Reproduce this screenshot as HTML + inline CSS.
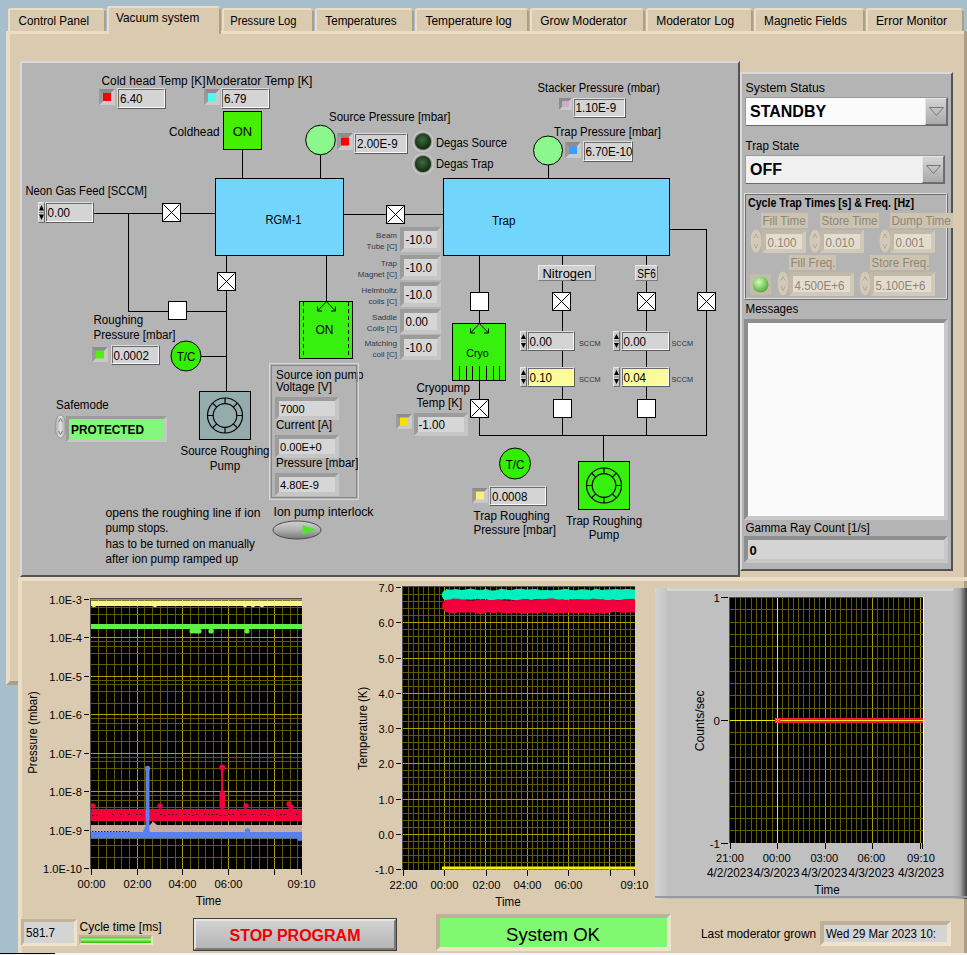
<!DOCTYPE html>
<html><head><meta charset="utf-8"><title>Vacuum system</title>
<style>
html,body{margin:0;padding:0;background:#a7bfcc;overflow:hidden;}
svg{display:block;}
text{font-family:"Liberation Sans", sans-serif;}
</style></head><body>
<svg width="967" height="955" viewBox="0 0 967 955" font-family='"Liberation Sans", sans-serif'>
<defs>
<radialGradient id="ledg" cx="0.45" cy="0.4" r="0.6"><stop offset="0" stop-color="#3f6a3f"/><stop offset="1" stop-color="#0e2a0e"/></radialGradient>
<radialGradient id="ledring" cx="0.5" cy="0.5" r="0.5"><stop offset="0.7" stop-color="#6a6a6a"/><stop offset="1" stop-color="#e0e0e0"/></radialGradient>
<radialGradient id="ledl" cx="0.4" cy="0.35" r="0.65"><stop offset="0" stop-color="#d8f8c0"/><stop offset="0.5" stop-color="#8ed870"/><stop offset="1" stop-color="#5aa848"/></radialGradient>
<linearGradient id="spin" x1="0" y1="0" x2="1" y2="0"><stop offset="0" stop-color="#a8a8a8"/><stop offset="0.5" stop-color="#e0e0e0"/><stop offset="1" stop-color="#a0a0a0"/></linearGradient>
<linearGradient id="tog" x1="0" y1="0" x2="0" y2="1"><stop offset="0" stop-color="#d0d0d0"/><stop offset="0.5" stop-color="#b0b0b0"/><stop offset="1" stop-color="#787878"/></linearGradient>
<linearGradient id="btn" x1="0" y1="0" x2="0" y2="1"><stop offset="0" stop-color="#d6d6d6"/><stop offset="1" stop-color="#a8a8a8"/></linearGradient>
<linearGradient id="stopg" x1="0" y1="0" x2="0" y2="1"><stop offset="0" stop-color="#d4d4d4"/><stop offset="1" stop-color="#b4b4b4"/></linearGradient>
<linearGradient id="prog" x1="0" y1="0" x2="0" y2="1"><stop offset="0" stop-color="#40d010"/><stop offset="0.4" stop-color="#a0f880"/><stop offset="1" stop-color="#30b800"/></linearGradient>
<linearGradient id="lgrad" x1="0" y1="0" x2="1" y2="0"><stop offset="0" stop-color="#d4d4d4"/><stop offset="1" stop-color="#c4c4c4"/></linearGradient>
<linearGradient id="rgrad" x1="0" y1="0" x2="1" y2="0"><stop offset="0" stop-color="#c0c0c0"/><stop offset="0.5" stop-color="#a8a8a8"/><stop offset="1" stop-color="#404040"/></linearGradient>
</defs>
<rect x="0" y="0" width="967" height="955" fill="#a7bfcc" />
<rect x="6" y="31" width="961" height="654" fill="#dacab0" />
<rect x="6" y="31" width="961" height="3" fill="#ecdec4" />
<rect x="6" y="31" width="4" height="654" fill="#ecdec4" />
<polygon points="6,685 10,681 964,681 967,685" fill="#ad9f86"/>
<rect x="964" y="31" width="3" height="654" fill="#ad9f86" />
<path d="M8,31 L8,11 Q8,8 11,8 L103,8 Q106,8 106,11 L106,31 Z" fill="#dacab0"/>
<path d="M8,31 L8,11 Q8,8 11,8 L103,8 L103,10 L10,10 L10,31 Z" fill="#ecdec4"/>
<path d="M104,10 L106,11 L106,31 L104,31 Z" fill="#ad9f86"/>
<text x="18.6" y="25" font-size="12" textLength="70.4" lengthAdjust="spacingAndGlyphs" >Control Panel</text>
<path d="M222,31 L222,11 Q222,8 225,8 L311,8 Q314,8 314,11 L314,31 Z" fill="#dacab0"/>
<path d="M222,31 L222,11 Q222,8 225,8 L311,8 L311,10 L224,10 L224,31 Z" fill="#ecdec4"/>
<path d="M312,10 L314,11 L314,31 L312,31 Z" fill="#ad9f86"/>
<text x="230.3" y="25" font-size="12" textLength="66.2" lengthAdjust="spacingAndGlyphs" >Pressure Log</text>
<path d="M315,31 L315,11 Q315,8 318,8 L411,8 Q414,8 414,11 L414,31 Z" fill="#dacab0"/>
<path d="M315,31 L315,11 Q315,8 318,8 L411,8 L411,10 L317,10 L317,31 Z" fill="#ecdec4"/>
<path d="M412,10 L414,11 L414,31 L412,31 Z" fill="#ad9f86"/>
<text x="325.3" y="25" font-size="12" textLength="71.4" lengthAdjust="spacingAndGlyphs" >Temperatures</text>
<path d="M415,31 L415,11 Q415,8 418,8 L526,8 Q529,8 529,11 L529,31 Z" fill="#dacab0"/>
<path d="M415,31 L415,11 Q415,8 418,8 L526,8 L526,10 L417,10 L417,31 Z" fill="#ecdec4"/>
<path d="M527,10 L529,11 L529,31 L527,31 Z" fill="#ad9f86"/>
<text x="425.5" y="25" font-size="12" textLength="86.2" lengthAdjust="spacingAndGlyphs" >Temperature log</text>
<path d="M530,31 L530,11 Q530,8 533,8 L642,8 Q645,8 645,11 L645,31 Z" fill="#dacab0"/>
<path d="M530,31 L530,11 Q530,8 533,8 L642,8 L642,10 L532,10 L532,31 Z" fill="#ecdec4"/>
<path d="M643,10 L645,11 L645,31 L643,31 Z" fill="#ad9f86"/>
<text x="540.2" y="25" font-size="12" textLength="86.8" lengthAdjust="spacingAndGlyphs" >Grow Moderator</text>
<path d="M646,31 L646,11 Q646,8 649,8 L750,8 Q753,8 753,11 L753,31 Z" fill="#dacab0"/>
<path d="M646,31 L646,11 Q646,8 649,8 L750,8 L750,10 L648,10 L648,31 Z" fill="#ecdec4"/>
<path d="M751,10 L753,11 L753,31 L751,31 Z" fill="#ad9f86"/>
<text x="656.2" y="25" font-size="12" textLength="78" lengthAdjust="spacingAndGlyphs" >Moderator Log</text>
<path d="M754,31 L754,11 Q754,8 757,8 L862,8 Q865,8 865,11 L865,31 Z" fill="#dacab0"/>
<path d="M754,31 L754,11 Q754,8 757,8 L862,8 L862,10 L756,10 L756,31 Z" fill="#ecdec4"/>
<path d="M863,10 L865,11 L865,31 L863,31 Z" fill="#ad9f86"/>
<text x="764.1" y="25" font-size="12" textLength="82.7" lengthAdjust="spacingAndGlyphs" >Magnetic Fields</text>
<path d="M866,31 L866,11 Q866,8 869,8 L961,8 Q964,8 964,11 L964,31 Z" fill="#dacab0"/>
<path d="M866,31 L866,11 Q866,8 869,8 L961,8 L961,10 L868,10 L868,31 Z" fill="#ecdec4"/>
<path d="M962,10 L964,11 L964,31 L962,31 Z" fill="#ad9f86"/>
<text x="876" y="25" font-size="12" textLength="71" lengthAdjust="spacingAndGlyphs" >Error Monitor</text>
<path d="M107,34 L107,9 Q107,6 110,6 L218,6 Q221,6 221,9 L221,34 Z" fill="#dacab0"/>
<path d="M107,34 L107,9 Q107,6 110,6 L218,6 L218,8 L109,8 L109,34 Z" fill="#ecdec4"/>
<path d="M219,8 L221,9 L221,34 L219,34 Z" fill="#ad9f86"/>
<text x="116" y="22" font-size="12" textLength="83.3" lengthAdjust="spacingAndGlyphs" >Vacuum system</text>
<rect x="109" y="31" width="110" height="3" fill="#dacab0" />
<rect x="20" y="61" width="720" height="516" fill="#b4b4b4" />
<polygon points="20,61 740,61 738,63 22,63 22,575 20,577" fill="#d9d9d9"/>
<polygon points="740,61 740,577 20,577 22,575 738,575 738,63" fill="#535353"/>
<rect x="740" y="72" width="213" height="499" fill="#b4b4b4" />
<polygon points="740,72 953,72 951,74 742,74 742,569 740,571" fill="#d9d9d9"/>
<polygon points="953,72 953,571 740,571 742,569 951,569 951,74" fill="#535353"/>
<rect x="18" y="577" width="949" height="378" fill="#dacab0" />
<rect x="18" y="577" width="949" height="4" fill="#ecdec4" />
<rect x="18" y="577" width="4" height="378" fill="#ecdec4" />
<rect x="964" y="581" width="3" height="374" fill="#ad9f86" />
<rect x="242" y="150" width="1" height="28" fill="#000"/>
<rect x="320" y="154" width="1" height="24" fill="#000"/>
<rect x="94" y="213" width="121" height="1" fill="#000"/>
<rect x="128" y="213" width="1" height="99" fill="#000"/>
<rect x="128" y="311" width="99" height="1" fill="#000"/>
<rect x="344" y="214" width="99" height="1" fill="#000"/>
<rect x="226" y="256" width="1" height="135" fill="#000"/>
<rect x="201" y="356" width="25" height="1" fill="#000"/>
<rect x="326" y="256" width="1" height="45" fill="#000"/>
<rect x="548" y="165" width="1" height="13" fill="#000"/>
<rect x="670" y="229" width="37" height="1" fill="#000"/>
<rect x="706" y="229" width="1" height="207" fill="#000"/>
<rect x="479" y="256" width="1" height="67" fill="#000"/>
<rect x="479" y="381" width="1" height="55" fill="#000"/>
<rect x="562" y="256" width="1" height="180" fill="#000"/>
<rect x="646" y="256" width="1" height="180" fill="#000"/>
<rect x="479" y="435" width="228" height="1" fill="#000"/>
<rect x="603" y="435" width="1" height="26" fill="#000"/>
<text x="101.5" y="85" font-size="12" textLength="104" lengthAdjust="spacingAndGlyphs" >Cold head Temp [K]</text>
<text x="206" y="85" font-size="12" textLength="106.5" lengthAdjust="spacingAndGlyphs" >Moderator Temp [K]</text>
<polygon points="99,89 115,89 111,93 103,93 103,101 99,105" fill="#8c8c8c"/>
<polygon points="115,89 115,105 99,105 103,101 111,101 111,93" fill="#cacaca"/>
<rect x="103" y="93" width="8" height="8" fill="#b8b8b8" />
<polygon points="99,89 103,93 103,101 99,105" fill="#9a9a9a"/>
<rect x="103.0" y="93.0" width="8" height="8" fill="#ff0000" />
<rect x="117" y="88" width="49" height="21" fill="#d4d4d4" />
<polygon points="117,88 166,88 165,89 118,89 118,108 117,109" fill="#dcdcdc"/>
<polygon points="166,88 166,109 117,109 118,108 165,108 165,89" fill="#5c5c5c"/>
<polygon points="118,89 165,89 164,90 119,90 119,107 118,108" fill="#6c6c6c"/>
<polygon points="165,89 165,108 118,108 119,107 164,107 164,90" fill="#fafafa"/>
<text x="120" y="102.5" font-size="12" textLength="22.5" lengthAdjust="spacingAndGlyphs" >6.40</text>
<polygon points="204,89 220,89 216,93 208,93 208,101 204,105" fill="#8c8c8c"/>
<polygon points="220,89 220,105 204,105 208,101 216,101 216,93" fill="#cacaca"/>
<rect x="208" y="93" width="8" height="8" fill="#b8b8b8" />
<polygon points="204,89 208,93 208,101 204,105" fill="#9a9a9a"/>
<rect x="208.0" y="93.0" width="8" height="8" fill="#55f5f5" />
<rect x="221" y="88" width="49" height="21" fill="#d4d4d4" />
<polygon points="221,88 270,88 269,89 222,89 222,108 221,109" fill="#dcdcdc"/>
<polygon points="270,88 270,109 221,109 222,108 269,108 269,89" fill="#5c5c5c"/>
<polygon points="222,89 269,89 268,90 223,90 223,107 222,108" fill="#6c6c6c"/>
<polygon points="269,89 269,108 222,108 223,107 268,107 268,90" fill="#fafafa"/>
<text x="224" y="102.5" font-size="12" textLength="22.5" lengthAdjust="spacingAndGlyphs" >6.79</text>
<rect x="223.5" y="111.5" width="38" height="38" fill="#44f000" stroke="#000" stroke-width="1"/>
<text x="242.5" y="136" font-size="13" text-anchor="middle" >ON</text>
<text x="169" y="136" font-size="12" textLength="50.5" lengthAdjust="spacingAndGlyphs" >Coldhead</text>
<text x="329" y="121" font-size="12" textLength="121.5" lengthAdjust="spacingAndGlyphs" >Source Pressure [mbar]</text>
<circle cx="320.5" cy="140" r="14.8" fill="#8cf78c" stroke="#000" stroke-width="1"/>
<polygon points="337,133 353,133 349,137 341,137 341,146 337,150" fill="#8c8c8c"/>
<polygon points="353,133 353,150 337,150 341,146 349,146 349,137" fill="#cacaca"/>
<rect x="341" y="137" width="8" height="9" fill="#b8b8b8" />
<polygon points="337,133 341,137 341,146 337,150" fill="#9a9a9a"/>
<rect x="341.0" y="137.5" width="8" height="8" fill="#ff0000" />
<rect x="354" y="133" width="54" height="21" fill="#d4d4d4" />
<polygon points="354,133 408,133 407,134 355,134 355,153 354,154" fill="#dcdcdc"/>
<polygon points="408,133 408,154 354,154 355,153 407,153 407,134" fill="#5c5c5c"/>
<polygon points="355,134 407,134 406,135 356,135 356,152 355,153" fill="#6c6c6c"/>
<polygon points="407,134 407,153 355,153 356,152 406,152 406,135" fill="#fafafa"/>
<text x="357" y="147.5" font-size="12" textLength="40.6" lengthAdjust="spacingAndGlyphs" >2.00E-9</text>
<circle cx="423" cy="141.5" r="10.5" fill="url(#ledring)"/>
<circle cx="423" cy="141.5" r="8" fill="url(#ledg)"/>
<text x="436" y="146.5" font-size="12" textLength="71" lengthAdjust="spacingAndGlyphs" >Degas Source</text>
<circle cx="423" cy="164" r="10.5" fill="url(#ledring)"/>
<circle cx="423" cy="164" r="8" fill="url(#ledg)"/>
<text x="436" y="168" font-size="12" textLength="57.5" lengthAdjust="spacingAndGlyphs" >Degas Trap</text>
<text x="537.5" y="91.5" font-size="12" textLength="122.5" lengthAdjust="spacingAndGlyphs" >Stacker Pressure (mbar)</text>
<polygon points="559,98 572,98 569,101 562,101 562,107 559,110" fill="#8c8c8c"/>
<polygon points="572,98 572,110 559,110 562,107 569,107 569,101" fill="#cacaca"/>
<rect x="562" y="101" width="7" height="6" fill="#b8b8b8" />
<rect x="563" y="101.5" width="6" height="5" fill="#d8a8c8" />
<rect x="573" y="98" width="53" height="20" fill="#d4d4d4" />
<polygon points="573,98 626,98 625,99 574,99 574,117 573,118" fill="#dcdcdc"/>
<polygon points="626,98 626,118 573,118 574,117 625,117 625,99" fill="#5c5c5c"/>
<polygon points="574,99 625,99 624,100 575,100 575,116 574,117" fill="#6c6c6c"/>
<polygon points="625,99 625,117 574,117 575,116 624,116 624,100" fill="#fafafa"/>
<text x="575.5" y="112" font-size="12" textLength="40.6" lengthAdjust="spacingAndGlyphs" >1.10E-9</text>
<text x="554" y="136" font-size="12" textLength="107" lengthAdjust="spacingAndGlyphs" >Trap Pressure [mbar]</text>
<circle cx="548" cy="150.5" r="14.5" fill="#8cf78c" stroke="#000" stroke-width="1"/>
<polygon points="565,142 581,142 577,146 569,146 569,154 565,158" fill="#8c8c8c"/>
<polygon points="581,142 581,158 565,158 569,154 577,154 577,146" fill="#cacaca"/>
<rect x="569" y="146" width="8" height="8" fill="#b8b8b8" />
<polygon points="565,142 569,146 569,154 565,158" fill="#9a9a9a"/>
<rect x="569.0" y="146.0" width="8" height="8" fill="#3f9cff" />
<rect x="583" y="141" width="50" height="21" fill="#d4d4d4" />
<polygon points="583,141 633,141 632,142 584,142 584,161 583,162" fill="#dcdcdc"/>
<polygon points="633,141 633,162 583,162 584,161 632,161 632,142" fill="#5c5c5c"/>
<polygon points="584,142 632,142 631,143 585,143 585,160 584,161" fill="#6c6c6c"/>
<polygon points="632,142 632,161 584,161 585,160 631,160 631,143" fill="#fafafa"/>
<text x="585.5" y="155.5" font-size="12" textLength="47.0" lengthAdjust="spacingAndGlyphs" >6.70E-10</text>
<text x="25.5" y="195" font-size="12" textLength="121.5" lengthAdjust="spacingAndGlyphs" >Neon Gas Feed [SCCM]</text>
<rect x="38" y="202" width="7" height="21" fill="#c8c8c8" />
<polygon points="38,202 45,202 44,203 39,203 39,222 38,223" fill="#e8e8e8"/>
<polygon points="45,202 45,223 38,223 39,222 44,222 44,203" fill="#6a6a6a"/>
<polygon points="39.0,210.5 44.0,210.5 41.5,205" fill="#000"/>
<polygon points="39.0,214.5 44.0,214.5 41.5,220" fill="#000"/>
<rect x="39" y="212.0" width="5" height="1" fill="#808080"/>
<rect x="45" y="202" width="49" height="21" fill="#d4d4d4" />
<polygon points="45,202 94,202 93,203 46,203 46,222 45,223" fill="#dcdcdc"/>
<polygon points="94,202 94,223 45,223 46,222 93,222 93,203" fill="#5c5c5c"/>
<polygon points="46,203 93,203 92,204 47,204 47,221 46,222" fill="#6c6c6c"/>
<polygon points="93,203 93,222 46,222 47,221 92,221 92,204" fill="#fafafa"/>
<text x="47.5" y="216.5" font-size="12" textLength="22.5" lengthAdjust="spacingAndGlyphs" >0.00</text>
<rect x="162.5" y="203.5" width="18" height="18" fill="#fff" stroke="#000" stroke-width="1"/>
<path d="M163.5,204.5 L179.5,220.5 M179.5,204.5 L163.5,220.5" stroke="#000" stroke-width="1"/>
<rect x="215.5" y="178.5" width="128" height="77" fill="#72d6fc" stroke="#000" stroke-width="1"/>
<text x="283.5" y="224" font-size="12" text-anchor="middle" textLength="36" lengthAdjust="spacingAndGlyphs" >RGM-1</text>
<rect x="386.5" y="205.5" width="18" height="18" fill="#fff" stroke="#000" stroke-width="1"/>
<path d="M387.5,206.5 L403.5,222.5 M403.5,206.5 L387.5,222.5" stroke="#000" stroke-width="1"/>
<rect x="217.5" y="272.5" width="18" height="18" fill="#fff" stroke="#000" stroke-width="1"/>
<path d="M218.5,273.5 L234.5,289.5 M234.5,273.5 L218.5,289.5" stroke="#000" stroke-width="1"/>
<rect x="168.5" y="301.5" width="18" height="18" fill="#fff" stroke="#000" stroke-width="1"/>
<circle cx="186" cy="356" r="15" fill="#33ee00" stroke="#000" stroke-width="1"/>
<text x="186" y="361" font-size="12" text-anchor="middle" textLength="18.7" lengthAdjust="spacingAndGlyphs" >T/C</text>
<text x="93.5" y="324" font-size="12" textLength="49.6" lengthAdjust="spacingAndGlyphs" >Roughing</text>
<text x="93.5" y="339" font-size="12" textLength="82" lengthAdjust="spacingAndGlyphs" >Pressure [mbar]</text>
<polygon points="92,347 108,347 104,351 96,351 96,358 92,362" fill="#8c8c8c"/>
<polygon points="108,347 108,362 92,362 96,358 104,358 104,351" fill="#cacaca"/>
<rect x="96" y="351" width="8" height="7" fill="#b8b8b8" />
<polygon points="92,347 96,351 96,358 92,362" fill="#9a9a9a"/>
<rect x="96.0" y="350.5" width="8" height="8" fill="#55ee11" />
<rect x="111" y="345" width="49" height="20" fill="#d4d4d4" />
<polygon points="111,345 160,345 159,346 112,346 112,364 111,365" fill="#dcdcdc"/>
<polygon points="160,345 160,365 111,365 112,364 159,364 159,346" fill="#5c5c5c"/>
<polygon points="112,346 159,346 158,347 113,347 113,363 112,364" fill="#6c6c6c"/>
<polygon points="159,346 159,364 112,364 113,363 158,363 158,347" fill="#fafafa"/>
<text x="113.5" y="359.5" font-size="12" textLength="35.4" lengthAdjust="spacingAndGlyphs" >0.0002</text>
<rect x="199.5" y="391.5" width="51" height="48" fill="#94acac" stroke="#000" stroke-width="1"/>
<circle cx="225.0" cy="415.5" r="17.5" fill="none" stroke="#000" stroke-width="1.2"/>
<circle cx="225.0" cy="415.5" r="11.8" fill="none" stroke="#000" stroke-width="1.2"/>
<path d="M236.80,415.50 L242.50,415.50 M233.34,423.84 L237.37,427.87 M225.00,427.30 L225.00,433.00 M216.66,423.84 L212.63,427.87 M213.20,415.50 L207.50,415.50 M216.66,407.16 L212.63,403.13 M225.00,403.70 L225.00,398.00 M233.34,407.16 L237.37,403.13 " stroke="#000" stroke-width="1.2"/>
<text x="225" y="454.5" font-size="12" text-anchor="middle" textLength="89" lengthAdjust="spacingAndGlyphs" >Source Roughing</text>
<text x="225" y="469.5" font-size="12" text-anchor="middle" textLength="30.3" lengthAdjust="spacingAndGlyphs" >Pump</text>
<text x="56" y="408.5" font-size="12" textLength="52.8" lengthAdjust="spacingAndGlyphs" >Safemode</text>
<ellipse cx="60.5" cy="426.5" rx="5.5" ry="11.5" fill="url(#spin)" stroke="#9a9a9a" stroke-width="1"/>
<path d="M58.5,422 L60.5,418.5 L62.5,422 M58.5,431 L60.5,434.5 L62.5,431" stroke="#666" stroke-width="0.8" fill="none"/>
<polygon points="66,416 167,416 164,419 69,419 69,439 66,442" fill="#9c9c9c"/>
<polygon points="167,416 167,442 66,442 69,439 164,439 164,419" fill="#c6c6c6"/>
<rect x="69" y="419" width="95" height="20" fill="#80f87a" />
<text x="71" y="433.5" font-size="13" font-weight="bold" textLength="73" lengthAdjust="spacingAndGlyphs" >PROTECTED</text>
<rect x="299.5" y="301.5" width="53" height="57" fill="#36f00e" stroke="#000" stroke-width="1"/>
<path d="M303.5,302 L303.5,358 M348.5,302 L348.5,358" stroke="#000" stroke-width="1" stroke-dasharray="4,3"/>
<path d="M326.5,301.5 L317.5,311 M326.5,301.5 L335.5,311 M317.5,311 L317.5,306.5 M317.5,311 L322,311 M335.5,311 L335.5,306.5 M335.5,311 L331,311" stroke="#000" stroke-width="1" fill="none"/>
<text x="324.5" y="334" font-size="12" text-anchor="middle" >ON</text>
<polygon points="400,227 441,227 437,231 404,231 404,248 400,252" fill="#9c9c9c"/>
<polygon points="441,227 441,252 400,252 404,248 437,248 437,231" fill="#c6c6c6"/>
<rect x="404" y="231" width="33" height="17" fill="#d6d6d6" />
<text x="405.5" y="243.5" font-size="12" textLength="26.4" lengthAdjust="spacingAndGlyphs" >-10.0</text>
<text x="397" y="238" font-size="8" text-anchor="end" fill="#2e3a4a" >Beam</text>
<text x="397" y="249" font-size="8" text-anchor="end" fill="#2e3a4a" >Tube [C]</text>
<polygon points="400,255 441,255 437,259 404,259 404,276 400,280" fill="#9c9c9c"/>
<polygon points="441,255 441,280 400,280 404,276 437,276 437,259" fill="#c6c6c6"/>
<rect x="404" y="259" width="33" height="17" fill="#d6d6d6" />
<text x="405.5" y="271.5" font-size="12" textLength="26.4" lengthAdjust="spacingAndGlyphs" >-10.0</text>
<text x="397" y="266" font-size="8" text-anchor="end" fill="#2e3a4a" >Trap</text>
<text x="397" y="277" font-size="8" text-anchor="end" fill="#2e3a4a" >Magnet [C]</text>
<polygon points="400,282 441,282 437,286 404,286 404,303 400,307" fill="#9c9c9c"/>
<polygon points="441,282 441,307 400,307 404,303 437,303 437,286" fill="#c6c6c6"/>
<rect x="404" y="286" width="33" height="17" fill="#d6d6d6" />
<text x="405.5" y="298.5" font-size="12" textLength="26.4" lengthAdjust="spacingAndGlyphs" >-10.0</text>
<text x="397" y="293" font-size="8" text-anchor="end" fill="#2e3a4a" >Helmholtz</text>
<text x="397" y="304" font-size="8" text-anchor="end" fill="#2e3a4a" >coils [C]</text>
<polygon points="400,309 441,309 437,313 404,313 404,330 400,334" fill="#9c9c9c"/>
<polygon points="441,309 441,334 400,334 404,330 437,330 437,313" fill="#c6c6c6"/>
<rect x="404" y="313" width="33" height="17" fill="#d6d6d6" />
<text x="405.5" y="325.5" font-size="12" textLength="22.5" lengthAdjust="spacingAndGlyphs" >0.00</text>
<text x="397" y="320" font-size="8" text-anchor="end" fill="#2e3a4a" >Saddle</text>
<text x="397" y="331" font-size="8" text-anchor="end" fill="#2e3a4a" >Coils [C]</text>
<polygon points="400,335 441,335 437,339 404,339 404,356 400,360" fill="#9c9c9c"/>
<polygon points="441,335 441,360 400,360 404,356 437,356 437,339" fill="#c6c6c6"/>
<rect x="404" y="339" width="33" height="17" fill="#d6d6d6" />
<text x="405.5" y="351.5" font-size="12" textLength="26.4" lengthAdjust="spacingAndGlyphs" >-10.0</text>
<text x="397" y="346" font-size="8" text-anchor="end" fill="#2e3a4a" >Matching</text>
<text x="397" y="357" font-size="8" text-anchor="end" fill="#2e3a4a" >coil [C]</text>
<rect x="269" y="363" width="90" height="137" fill="#b4b4b4" />
<rect x="269.5" y="363.5" width="89" height="136" fill="none" stroke="#d6d6d6" stroke-width="1"/>
<rect x="271.5" y="365.5" width="85" height="132" fill="none" stroke="#858585" stroke-width="1"/>
<text x="276" y="378.5" font-size="12" textLength="87.5" lengthAdjust="spacingAndGlyphs" >Source ion pump</text>
<text x="276" y="390.5" font-size="12" textLength="56.0" lengthAdjust="spacingAndGlyphs" >Voltage [V]</text>
<rect x="356.5" y="365.5" width="0.01" height="20" fill="none" stroke="#858585" stroke-width="1"/>
<rect x="358.5" y="363.5" width="0.01" height="22" fill="none" stroke="#d6d6d6" stroke-width="1"/>
<polygon points="275,397 339,397 335,401 279,401 279,416 275,420" fill="#9c9c9c"/>
<polygon points="339,397 339,420 275,420 279,416 335,416 335,401" fill="#c6c6c6"/>
<rect x="279" y="401" width="56" height="15" fill="#d6d6d6" />
<text x="280" y="412.5" font-size="11.5" textLength="24.7" lengthAdjust="spacingAndGlyphs" >7000</text>
<text x="276" y="429" font-size="12" textLength="56.0" lengthAdjust="spacingAndGlyphs" >Current [A]</text>
<polygon points="275,435 339,435 335,439 279,439 279,454 275,458" fill="#9c9c9c"/>
<polygon points="339,435 339,458 275,458 279,454 335,454 335,439" fill="#c6c6c6"/>
<rect x="279" y="439" width="56" height="15" fill="#d6d6d6" />
<text x="280" y="450.5" font-size="11.5" textLength="41.7" lengthAdjust="spacingAndGlyphs" >0.00E+0</text>
<text x="276" y="466.5" font-size="12" textLength="82.4" lengthAdjust="spacingAndGlyphs" >Pressure [mbar]</text>
<polygon points="275,473 339,473 335,477 279,477 279,492 275,496" fill="#9c9c9c"/>
<polygon points="339,473 339,496 275,496 279,492 335,492 335,477" fill="#c6c6c6"/>
<rect x="279" y="477" width="56" height="15" fill="#d6d6d6" />
<text x="280" y="488.5" font-size="11.5" textLength="38.9" lengthAdjust="spacingAndGlyphs" >4.80E-9</text>
<text x="273.5" y="515.5" font-size="12" textLength="100" lengthAdjust="spacingAndGlyphs" >Ion pump interlock</text>
<ellipse cx="297" cy="530" rx="24" ry="9" fill="url(#tog)" stroke="#4a4a4a" stroke-width="1"/>
<polygon points="302.5,525 302.5,534.5 316,529.7" fill="#4ee82a"/>
<text x="105.5" y="517" font-size="12" textLength="155" lengthAdjust="spacingAndGlyphs" >opens the roughing line if ion</text>
<text x="105.5" y="532" font-size="12" textLength="63.1" lengthAdjust="spacingAndGlyphs" >pump stops.</text>
<text x="105.5" y="547.5" font-size="12" textLength="149.4" lengthAdjust="spacingAndGlyphs" >has to be turned on manually</text>
<text x="105.5" y="562.5" font-size="12" textLength="132.6" lengthAdjust="spacingAndGlyphs" >after ion pump ramped up</text>
<rect x="443.5" y="178.5" width="226" height="77" fill="#72d6fc" stroke="#000" stroke-width="1"/>
<text x="492" y="224.5" font-size="12" textLength="23.4" lengthAdjust="spacingAndGlyphs" >Trap</text>
<rect x="538" y="265" width="58" height="16" fill="#d0d0d0" />
<polygon points="538,265 596,265 595,266 539,266 539,280 538,281" fill="#ececec"/>
<polygon points="596,265 596,281 538,281 539,280 595,280 595,266" fill="#7c7c7c"/>
<text x="567" y="278" font-size="12" text-anchor="middle" textLength="49" lengthAdjust="spacingAndGlyphs" >Nitrogen</text>
<rect x="635" y="265" width="23" height="16" fill="#d0d0d0" />
<polygon points="635,265 658,265 657,266 636,266 636,280 635,281" fill="#ececec"/>
<polygon points="658,265 658,281 635,281 636,280 657,280 657,266" fill="#7c7c7c"/>
<text x="646.5" y="278" font-size="12" text-anchor="middle" textLength="18.5" lengthAdjust="spacingAndGlyphs" >SF6</text>
<rect x="470.5" y="292.5" width="18" height="18" fill="#fff" stroke="#000" stroke-width="1"/>
<rect x="552.5" y="292.5" width="18" height="18" fill="#fff" stroke="#000" stroke-width="1"/>
<path d="M553.5,293.5 L569.5,309.5 M569.5,293.5 L553.5,309.5" stroke="#000" stroke-width="1"/>
<rect x="637.5" y="292.5" width="18" height="18" fill="#fff" stroke="#000" stroke-width="1"/>
<path d="M638.5,293.5 L654.5,309.5 M654.5,293.5 L638.5,309.5" stroke="#000" stroke-width="1"/>
<rect x="697.5" y="292.5" width="18" height="18" fill="#fff" stroke="#000" stroke-width="1"/>
<path d="M698.5,293.5 L714.5,309.5 M714.5,293.5 L698.5,309.5" stroke="#000" stroke-width="1"/>
<rect x="452.5" y="323.5" width="53" height="57" fill="#36f00e" stroke="#000" stroke-width="1"/>
<text x="477.5" y="357" font-size="11" text-anchor="middle" textLength="22.4" lengthAdjust="spacingAndGlyphs" >Cryo</text>
<path d="M459.5,366 L459.5,381 M466.5,366 L466.5,381 M472.5,366 L472.5,381 M479.5,366 L479.5,381 M486.5,366 L486.5,381 M493.5,366 L493.5,381 M499.5,366 L499.5,381" stroke="#000" stroke-width="1"/>
<path d="M479.5,323.5 L470.5,333 M479.5,323.5 L488.5,333 M470.5,333 L470.5,328.5 M470.5,333 L475,333 M488.5,333 L488.5,328.5 M488.5,333 L484,333" stroke="#000" stroke-width="1" fill="none"/>
<rect x="470.5" y="399.5" width="18" height="18" fill="#fff" stroke="#000" stroke-width="1"/>
<path d="M471.5,400.5 L487.5,416.5 M487.5,400.5 L471.5,416.5" stroke="#000" stroke-width="1"/>
<rect x="520" y="331" width="7" height="20" fill="#c8c8c8" />
<polygon points="520,331 527,331 526,332 521,332 521,350 520,351" fill="#e8e8e8"/>
<polygon points="527,331 527,351 520,351 521,350 526,350 526,332" fill="#6a6a6a"/>
<polygon points="521.0,339.0 526.0,339.0 523.5,334" fill="#000"/>
<polygon points="521.0,343.0 526.0,343.0 523.5,348" fill="#000"/>
<rect x="521" y="340.5" width="5" height="1" fill="#808080"/>
<rect x="527" y="331" width="48" height="20" fill="#d4d4d4" />
<polygon points="527,331 575,331 574,332 528,332 528,350 527,351" fill="#dcdcdc"/>
<polygon points="575,331 575,351 527,351 528,350 574,350 574,332" fill="#5c5c5c"/>
<polygon points="528,332 574,332 573,333 529,333 529,349 528,350" fill="#6c6c6c"/>
<polygon points="574,332 574,350 528,350 529,349 573,349 573,333" fill="#fafafa"/>
<text x="529.5" y="345.5" font-size="12" textLength="22.5" lengthAdjust="spacingAndGlyphs" >0.00</text>
<text x="579" y="345.5" font-size="8" fill="#333" textLength="21.5" lengthAdjust="spacingAndGlyphs" >SCCM</text>
<rect x="520" y="367" width="7" height="20" fill="#c8c8c8" />
<polygon points="520,367 527,367 526,368 521,368 521,386 520,387" fill="#e8e8e8"/>
<polygon points="527,367 527,387 520,387 521,386 526,386 526,368" fill="#6a6a6a"/>
<polygon points="521.0,375.0 526.0,375.0 523.5,370" fill="#000"/>
<polygon points="521.0,379.0 526.0,379.0 523.5,384" fill="#000"/>
<rect x="521" y="376.5" width="5" height="1" fill="#808080"/>
<rect x="527" y="367" width="48" height="20" fill="#fbfb9c" />
<polygon points="527,367 575,367 574,368 528,368 528,386 527,387" fill="#dcdcdc"/>
<polygon points="575,367 575,387 527,387 528,386 574,386 574,368" fill="#5c5c5c"/>
<polygon points="528,368 574,368 573,369 529,369 529,385 528,386" fill="#6c6c6c"/>
<polygon points="574,368 574,386 528,386 529,385 573,385 573,369" fill="#fafafa"/>
<text x="529.5" y="381.5" font-size="12" textLength="22.5" lengthAdjust="spacingAndGlyphs" >0.10</text>
<text x="579" y="381.5" font-size="8" fill="#333" textLength="21.5" lengthAdjust="spacingAndGlyphs" >SCCM</text>
<rect x="613" y="331" width="7" height="20" fill="#c8c8c8" />
<polygon points="613,331 620,331 619,332 614,332 614,350 613,351" fill="#e8e8e8"/>
<polygon points="620,331 620,351 613,351 614,350 619,350 619,332" fill="#6a6a6a"/>
<polygon points="614.0,339.0 619.0,339.0 616.5,334" fill="#000"/>
<polygon points="614.0,343.0 619.0,343.0 616.5,348" fill="#000"/>
<rect x="614" y="340.5" width="5" height="1" fill="#808080"/>
<rect x="621" y="331" width="49" height="20" fill="#d4d4d4" />
<polygon points="621,331 670,331 669,332 622,332 622,350 621,351" fill="#dcdcdc"/>
<polygon points="670,331 670,351 621,351 622,350 669,350 669,332" fill="#5c5c5c"/>
<polygon points="622,332 669,332 668,333 623,333 623,349 622,350" fill="#6c6c6c"/>
<polygon points="669,332 669,350 622,350 623,349 668,349 668,333" fill="#fafafa"/>
<text x="623.5" y="345.5" font-size="12" textLength="22.5" lengthAdjust="spacingAndGlyphs" >0.00</text>
<text x="671.5" y="345.5" font-size="8" fill="#333" textLength="21.5" lengthAdjust="spacingAndGlyphs" >SCCM</text>
<rect x="613" y="367" width="7" height="20" fill="#c8c8c8" />
<polygon points="613,367 620,367 619,368 614,368 614,386 613,387" fill="#e8e8e8"/>
<polygon points="620,367 620,387 613,387 614,386 619,386 619,368" fill="#6a6a6a"/>
<polygon points="614.0,375.0 619.0,375.0 616.5,370" fill="#000"/>
<polygon points="614.0,379.0 619.0,379.0 616.5,384" fill="#000"/>
<rect x="614" y="376.5" width="5" height="1" fill="#808080"/>
<rect x="621" y="367" width="49" height="20" fill="#fbfb9c" />
<polygon points="621,367 670,367 669,368 622,368 622,386 621,387" fill="#dcdcdc"/>
<polygon points="670,367 670,387 621,387 622,386 669,386 669,368" fill="#5c5c5c"/>
<polygon points="622,368 669,368 668,369 623,369 623,385 622,386" fill="#6c6c6c"/>
<polygon points="669,368 669,386 622,386 623,385 668,385 668,369" fill="#fafafa"/>
<text x="623.5" y="381.5" font-size="12" textLength="22.5" lengthAdjust="spacingAndGlyphs" >0.04</text>
<text x="671.5" y="381.5" font-size="8" fill="#333" textLength="21.5" lengthAdjust="spacingAndGlyphs" >SCCM</text>
<rect x="553.5" y="399.5" width="18" height="18" fill="#fff" stroke="#000" stroke-width="1"/>
<rect x="637.5" y="399.5" width="18" height="18" fill="#fff" stroke="#000" stroke-width="1"/>
<text x="416.5" y="392" font-size="12" textLength="53.4" lengthAdjust="spacingAndGlyphs" >Cryopump</text>
<text x="416.5" y="407" font-size="12" textLength="45.7" lengthAdjust="spacingAndGlyphs" >Temp [K]</text>
<polygon points="396,414 412,414 408,418 400,418 400,425 396,429" fill="#8c8c8c"/>
<polygon points="412,414 412,429 396,429 400,425 408,425 408,418" fill="#cacaca"/>
<rect x="400" y="418" width="8" height="7" fill="#b8b8b8" />
<polygon points="396,414 400,418 400,425 396,429" fill="#9a9a9a"/>
<rect x="400.0" y="417.5" width="8" height="8" fill="#f8e000" />
<polygon points="414,413 468,413 464,417 418,417 418,432 414,436" fill="#9c9c9c"/>
<polygon points="468,413 468,436 414,436 418,432 464,432 464,417" fill="#c6c6c6"/>
<rect x="418" y="417" width="46" height="15" fill="#d6d6d6" />
<text x="418.5" y="428.5" font-size="12" textLength="26.4" lengthAdjust="spacingAndGlyphs" >-1.00</text>
<circle cx="515" cy="463.5" r="15.5" fill="#33ee00" stroke="#000" stroke-width="1"/>
<text x="515" y="469" font-size="12" text-anchor="middle" textLength="18.7" lengthAdjust="spacingAndGlyphs" >T/C</text>
<polygon points="472,488 488,488 484,492 476,492 476,499 472,503" fill="#8c8c8c"/>
<polygon points="488,488 488,503 472,503 476,499 484,499 484,492" fill="#cacaca"/>
<rect x="476" y="492" width="8" height="7" fill="#b8b8b8" />
<polygon points="472,488 476,492 476,499 472,503" fill="#9a9a9a"/>
<rect x="476.0" y="491.5" width="8" height="8" fill="#f8f07a" />
<rect x="489" y="486" width="58" height="20" fill="#d4d4d4" />
<polygon points="489,486 547,486 546,487 490,487 490,505 489,506" fill="#dcdcdc"/>
<polygon points="547,486 547,506 489,506 490,505 546,505 546,487" fill="#5c5c5c"/>
<polygon points="490,487 546,487 545,488 491,488 491,504 490,505" fill="#6c6c6c"/>
<polygon points="546,487 546,505 490,505 491,504 545,504 545,488" fill="#fafafa"/>
<text x="492" y="501" font-size="12" textLength="35.4" lengthAdjust="spacingAndGlyphs" >0.0008</text>
<text x="473.5" y="520" font-size="12" textLength="76.2" lengthAdjust="spacingAndGlyphs" >Trap Roughing</text>
<text x="473.5" y="534" font-size="12" textLength="82.4" lengthAdjust="spacingAndGlyphs" >Pressure [mbar]</text>
<rect x="578.5" y="461.5" width="51" height="48" fill="#36f00e" stroke="#000" stroke-width="1"/>
<circle cx="604.0" cy="485.5" r="17.5" fill="none" stroke="#000" stroke-width="1.2"/>
<circle cx="604.0" cy="485.5" r="11.8" fill="none" stroke="#000" stroke-width="1.2"/>
<path d="M615.80,485.50 L621.50,485.50 M612.34,493.84 L616.37,497.87 M604.00,497.30 L604.00,503.00 M595.66,493.84 L591.63,497.87 M592.20,485.50 L586.50,485.50 M595.66,477.16 L591.63,473.13 M604.00,473.70 L604.00,468.00 M612.34,477.16 L616.37,473.13 " stroke="#000" stroke-width="1.2"/>
<text x="604" y="525" font-size="12" text-anchor="middle" textLength="76.2" lengthAdjust="spacingAndGlyphs" >Trap Roughing</text>
<text x="604" y="539" font-size="12" text-anchor="middle" textLength="30.3" lengthAdjust="spacingAndGlyphs" >Pump</text>
<text x="745.5" y="91.5" font-size="12" textLength="79.5" lengthAdjust="spacingAndGlyphs" >System Status</text>
<rect x="745" y="97" width="203" height="29" fill="#fbfbfb" />
<polygon points="745,97 948,97 947,98 746,98 746,125 745,126" fill="#9a9a9a"/>
<polygon points="948,97 948,126 745,126 746,125 947,125 947,98" fill="#6a6a6a"/>
<rect x="925" y="98" width="22" height="27" fill="url(#btn)" />
<polygon points="925,98 947,98 946,99 926,99 926,124 925,125" fill="#e4e4e4"/>
<polygon points="947,98 947,125 925,125 926,124 946,124 946,99" fill="#707070"/>
<polygon points="929.5,107.5 943.5,107.5 936.5,115.5" fill="none" stroke="#777" stroke-width="1"/>
<text x="750" y="116.5" font-size="16" font-weight="bold" >STANDBY</text>
<text x="745.5" y="150" font-size="12" textLength="53.6" lengthAdjust="spacingAndGlyphs" >Trap State</text>
<rect x="745" y="155" width="200" height="29" fill="#f0f0f0" />
<polygon points="745,155 945,155 944,156 746,156 746,183 745,184" fill="#9a9a9a"/>
<polygon points="945,155 945,184 745,184 746,183 944,183 944,156" fill="#6a6a6a"/>
<rect x="922" y="156" width="22" height="27" fill="url(#btn)" />
<polygon points="922,156 944,156 943,157 923,157 923,182 922,183" fill="#e4e4e4"/>
<polygon points="944,156 944,183 922,183 923,182 943,182 943,157" fill="#707070"/>
<polygon points="926.5,165.5 940.5,165.5 933.5,173.5" fill="none" stroke="#777" stroke-width="1"/>
<text x="750" y="174.5" font-size="16" font-weight="bold" >OFF</text>
<polygon points="744,193 948,193 947,194 745,194 745,299 744,300" fill="#e0e0e0"/>
<polygon points="948,193 948,300 744,300 745,299 947,299 947,194" fill="#6c6c6c"/>
<polygon points="745,194 947,194 946,195 746,195 746,298 745,299" fill="#6c6c6c"/>
<polygon points="947,194 947,299 745,299 746,298 946,298 946,195" fill="#e0e0e0"/>
<text x="748" y="206.5" font-size="12" font-weight="bold" textLength="166" lengthAdjust="spacingAndGlyphs" >Cycle Trap Times [s] &amp; Freq. [Hz]</text>
<rect x="761" y="213" width="47" height="15" fill="#cdc3af" />
<text x="762.5" y="225" font-size="12" fill="#8c877b" textLength="43.1" lengthAdjust="spacingAndGlyphs" >Fill Time</text>
<rect x="820" y="213" width="59" height="15" fill="#cdc3af" />
<text x="821.5" y="225" font-size="12" fill="#8c877b" textLength="56.0" lengthAdjust="spacingAndGlyphs" >Store Time</text>
<rect x="890" y="213" width="63" height="15" fill="#cdc3af" />
<text x="891.5" y="225" font-size="12" fill="#8c877b" textLength="59.2" lengthAdjust="spacingAndGlyphs" >Dump Time</text>
<ellipse cx="756.0" cy="241.0" rx="6.0" ry="12.0" fill="#d2c9b8" stroke="#bdb4a3" stroke-width="1"/>
<path d="M754.0,238.0 L756.0,234.0 L758.0,238.0 M754.0,244.0 L756.0,248.0 L758.0,244.0" stroke="#a8a090" stroke-width="0.8" fill="none"/>
<polygon points="762,230 806,230 802,234 766,234 766,249 762,253" fill="#c2b9a8"/>
<polygon points="806,230 806,253 762,253 766,249 802,249 802,234" fill="#d2cab9"/>
<rect x="766" y="234" width="36" height="15" fill="#e4ddcf" />
<text x="767.5" y="247" font-size="12" fill="#8c877b" textLength="29.0" lengthAdjust="spacingAndGlyphs" >0.100</text>
<ellipse cx="815.0" cy="241.0" rx="6.0" ry="12.0" fill="#d2c9b8" stroke="#bdb4a3" stroke-width="1"/>
<path d="M813.0,238.0 L815.0,234.0 L817.0,238.0 M813.0,244.0 L815.0,248.0 L817.0,244.0" stroke="#a8a090" stroke-width="0.8" fill="none"/>
<polygon points="820,230 864,230 860,234 824,234 824,249 820,253" fill="#c2b9a8"/>
<polygon points="864,230 864,253 820,253 824,249 860,249 860,234" fill="#d2cab9"/>
<rect x="824" y="234" width="36" height="15" fill="#e4ddcf" />
<text x="825.5" y="247" font-size="12" fill="#8c877b" textLength="29.0" lengthAdjust="spacingAndGlyphs" >0.010</text>
<ellipse cx="885.0" cy="241.0" rx="6.0" ry="12.0" fill="#d2c9b8" stroke="#bdb4a3" stroke-width="1"/>
<path d="M883.0,238.0 L885.0,234.0 L887.0,238.0 M883.0,244.0 L885.0,248.0 L887.0,244.0" stroke="#a8a090" stroke-width="0.8" fill="none"/>
<polygon points="890,230 935,230 931,234 894,234 894,249 890,253" fill="#c2b9a8"/>
<polygon points="935,230 935,253 890,253 894,249 931,249 931,234" fill="#d2cab9"/>
<rect x="894" y="234" width="37" height="15" fill="#e4ddcf" />
<text x="895.5" y="247" font-size="12" fill="#8c877b" textLength="29.0" lengthAdjust="spacingAndGlyphs" >0.001</text>
<rect x="789" y="255" width="47" height="15" fill="#cdc3af" />
<text x="790.5" y="267" font-size="12" fill="#8c877b" textLength="45.0" lengthAdjust="spacingAndGlyphs" >Fill Freq.</text>
<rect x="870" y="255" width="59" height="15" fill="#cdc3af" />
<text x="871.5" y="267" font-size="12" fill="#8c877b" textLength="57.9" lengthAdjust="spacingAndGlyphs" >Store Freq.</text>
<rect x="750" y="274" width="21" height="21" fill="#c4bcab" />
<circle cx="760.5" cy="284.5" r="8" fill="url(#ledl)"/>
<ellipse cx="783.0" cy="283.5" rx="6.0" ry="12.5" fill="#d2c9b8" stroke="#bdb4a3" stroke-width="1"/>
<path d="M781.0,280.5 L783.0,276.5 L785.0,280.5 M781.0,286.5 L783.0,290.5 L785.0,286.5" stroke="#a8a090" stroke-width="0.8" fill="none"/>
<polygon points="789,272 854,272 850,276 793,276 793,292 789,296" fill="#c2b9a8"/>
<polygon points="854,272 854,296 789,296 793,292 850,292 850,276" fill="#d2cab9"/>
<rect x="793" y="276" width="57" height="16" fill="#e4ddcf" />
<text x="794.5" y="290" font-size="12" fill="#8c877b" textLength="49.9" lengthAdjust="spacingAndGlyphs" >4.500E+6</text>
<ellipse cx="865.0" cy="283.5" rx="6.0" ry="12.5" fill="#d2c9b8" stroke="#bdb4a3" stroke-width="1"/>
<path d="M863.0,280.5 L865.0,276.5 L867.0,280.5 M863.0,286.5 L865.0,290.5 L867.0,286.5" stroke="#a8a090" stroke-width="0.8" fill="none"/>
<polygon points="870,272 935,272 931,276 874,276 874,292 870,296" fill="#c2b9a8"/>
<polygon points="935,272 935,296 870,296 874,292 931,292 931,276" fill="#d2cab9"/>
<rect x="874" y="276" width="57" height="16" fill="#e4ddcf" />
<text x="875.5" y="290" font-size="12" fill="#8c877b" textLength="49.9" lengthAdjust="spacingAndGlyphs" >5.100E+6</text>
<text x="745.5" y="312.5" font-size="12" textLength="52.8" lengthAdjust="spacingAndGlyphs" >Messages</text>
<polygon points="744,319 948,319 944,323 748,323 748,516 744,520" fill="#8e8e8e"/>
<polygon points="948,319 948,520 744,520 748,516 944,516 944,323" fill="#c8c8c8"/>
<rect x="748" y="323" width="196" height="193" fill="#fafafa" />
<text x="745.5" y="532" font-size="12" textLength="124.2" lengthAdjust="spacingAndGlyphs" >Gamma Ray Count [1/s]</text>
<polygon points="744,536 948,536 944,540 748,540 748,559 744,563" fill="#8e8e8e"/>
<polygon points="948,536 948,563 744,563 748,559 944,559 944,540" fill="#c8c8c8"/>
<rect x="748" y="540" width="196" height="19" fill="#d4d4d4" />
<text x="749.5" y="555" font-size="13" font-weight="bold" >0</text>
<clipPath id="c1"><rect x="91" y="599" width="211" height="270"/></clipPath>
<rect x="90" y="598" width="212" height="271" fill="#000" />
<g clip-path="url(#c1)">
<rect x="98" y="598" width="1" height="271" fill="#625a00"/>
<rect x="106" y="598" width="1" height="271" fill="#625a00"/>
<rect x="114" y="598" width="1" height="271" fill="#625a00"/>
<rect x="121" y="598" width="1" height="271" fill="#625a00"/>
<rect x="129" y="598" width="1" height="271" fill="#625a00"/>
<rect x="137" y="598" width="1" height="271" fill="#ac9e00"/>
<rect x="144" y="598" width="1" height="271" fill="#625a00"/>
<rect x="152" y="598" width="1" height="271" fill="#625a00"/>
<rect x="160" y="598" width="1" height="271" fill="#625a00"/>
<rect x="167" y="598" width="1" height="271" fill="#625a00"/>
<rect x="175" y="598" width="1" height="271" fill="#625a00"/>
<rect x="182" y="598" width="1" height="271" fill="#ac9e00"/>
<rect x="190" y="598" width="1" height="271" fill="#625a00"/>
<rect x="198" y="598" width="1" height="271" fill="#625a00"/>
<rect x="205" y="598" width="1" height="271" fill="#625a00"/>
<rect x="213" y="598" width="1" height="271" fill="#625a00"/>
<rect x="221" y="598" width="1" height="271" fill="#625a00"/>
<rect x="228" y="598" width="1" height="271" fill="#ac9e00"/>
<rect x="236" y="598" width="1" height="271" fill="#625a00"/>
<rect x="244" y="598" width="1" height="271" fill="#625a00"/>
<rect x="251" y="598" width="1" height="271" fill="#625a00"/>
<rect x="259" y="598" width="1" height="271" fill="#625a00"/>
<rect x="267" y="598" width="1" height="271" fill="#625a00"/>
<rect x="274" y="598" width="1" height="271" fill="#ac9e00"/>
<rect x="282" y="598" width="1" height="271" fill="#625a00"/>
<rect x="290" y="598" width="1" height="271" fill="#625a00"/>
<rect x="297" y="598" width="1" height="271" fill="#625a00"/>
<rect x="305" y="598" width="1" height="271" fill="#625a00"/>
<rect x="90" y="599" width="212" height="1" fill="#ac9e00"/>
<rect x="90" y="626" width="212" height="1" fill="#625a00"/>
<rect x="90" y="614" width="212" height="1" fill="#625a00"/>
<rect x="90" y="607" width="212" height="1" fill="#625a00"/>
<rect x="90" y="603" width="212" height="1" fill="#625a00"/>
<rect x="90" y="637" width="212" height="1" fill="#ac9e00"/>
<rect x="90" y="664" width="212" height="1" fill="#625a00"/>
<rect x="90" y="653" width="212" height="1" fill="#625a00"/>
<rect x="90" y="646" width="212" height="1" fill="#625a00"/>
<rect x="90" y="641" width="212" height="1" fill="#625a00"/>
<rect x="90" y="676" width="212" height="1" fill="#ac9e00"/>
<rect x="90" y="703" width="212" height="1" fill="#625a00"/>
<rect x="90" y="691" width="212" height="1" fill="#625a00"/>
<rect x="90" y="684" width="212" height="1" fill="#625a00"/>
<rect x="90" y="680" width="212" height="1" fill="#625a00"/>
<rect x="90" y="714" width="212" height="1" fill="#ac9e00"/>
<rect x="90" y="741" width="212" height="1" fill="#625a00"/>
<rect x="90" y="730" width="212" height="1" fill="#625a00"/>
<rect x="90" y="723" width="212" height="1" fill="#625a00"/>
<rect x="90" y="718" width="212" height="1" fill="#625a00"/>
<rect x="90" y="753" width="212" height="1" fill="#ac9e00"/>
<rect x="90" y="780" width="212" height="1" fill="#625a00"/>
<rect x="90" y="768" width="212" height="1" fill="#625a00"/>
<rect x="90" y="761" width="212" height="1" fill="#625a00"/>
<rect x="90" y="757" width="212" height="1" fill="#625a00"/>
<rect x="90" y="791" width="212" height="1" fill="#ac9e00"/>
<rect x="90" y="818" width="212" height="1" fill="#625a00"/>
<rect x="90" y="807" width="212" height="1" fill="#625a00"/>
<rect x="90" y="800" width="212" height="1" fill="#625a00"/>
<rect x="90" y="795" width="212" height="1" fill="#625a00"/>
<rect x="90" y="830" width="212" height="1" fill="#ac9e00"/>
<rect x="90" y="857" width="212" height="1" fill="#625a00"/>
<rect x="90" y="845" width="212" height="1" fill="#625a00"/>
<rect x="90" y="838" width="212" height="1" fill="#625a00"/>
<rect x="90" y="833" width="212" height="1" fill="#625a00"/>
<rect x="90" y="600.5" width="212" height="5.5" fill="#f8f87e" />
<circle cx="94" cy="605" r="2.2" fill="#f8f87e"/>
<circle cx="155" cy="605" r="2.2" fill="#f8f87e"/>
<circle cx="245" cy="605" r="2.2" fill="#f8f87e"/>
<circle cx="253" cy="605" r="2.2" fill="#f8f87e"/>
<circle cx="262" cy="605" r="2.2" fill="#f8f87e"/>
<rect x="90" y="624" width="212" height="5" fill="#60f048" />
<circle cx="192" cy="631" r="2.6" fill="#60f048"/>
<circle cx="196" cy="631" r="2.6" fill="#60f048"/>
<circle cx="199" cy="631" r="2.6" fill="#60f048"/>
<circle cx="211" cy="631" r="2.6" fill="#60f048"/>
<circle cx="247" cy="631" r="2.6" fill="#60f048"/>
<rect x="90" y="809" width="212" height="12" fill="#f2003c" />
<path d="M92,815.5 h1.5 M96,815.5 h1.5 M112,814.5 h1.5 M120,814.5 h1.5 M128,814.5 h1.5 M136,814.5 h1.5 M140,814.5 h1.5 M148,814.5 h1.5 M160,814.5 h1.5 M164,815.5 h1.5 M168,814.5 h1.5 M172,814.5 h1.5 M176,814.5 h1.5 M184,814.5 h1.5 M188,814.5 h1.5 M192,815.5 h1.5 M196,814.5 h1.5 M204,814.5 h1.5 M208,814.5 h1.5 M212,814.5 h1.5 M216,814.5 h1.5 M220,815.5 h1.5 M224,815.5 h1.5 M228,814.5 h1.5 M232,814.5 h1.5 M240,814.5 h1.5 M244,814.5 h1.5 M252,814.5 h1.5 M260,814.5 h1.5 M264,814.5 h1.5 M268,815.5 h1.5 M276,815.5 h1.5 M280,814.5 h1.5 M284,814.5 h1.5 M296,814.5 h1.5 " stroke="#400010" stroke-width="1.2"/>
<rect x="90" y="825" width="212" height="7" fill="#c8aca0" />
<path d="M150,825 L153,821.5 L157,825 Z" fill="#c8aca0"/>
<rect x="90" y="832" width="212" height="6.5" fill="#5a80ee" />
<path d="M92,831.5 h1.5 M95,831.5 h1.5 M98,831.5 h1.5 M101,831.5 h1.5 M104,831.5 h1.5 M107,831.5 h1.5 M110,831.5 h1.5 M113,831.5 h1.5 M116,831.5 h1.5 M119,831.5 h1.5 M122,831.5 h1.5 M125,831.5 h1.5 M128,831.5 h1.5 " stroke="#202020" stroke-width="1"/>
<circle cx="300" cy="838.5" r="2.5" fill="#5a80ee"/>
<rect x="145.5" y="768" width="4" height="66" fill="#5a80ee"/>
<path d="M145.5,826 L150,832 L141,836 Z" fill="#5a80ee"/>
<circle cx="147.5" cy="768.5" r="2.7" fill="#5a80ee"/>
<rect x="221.5" y="767" width="1.5" height="43" fill="#f2003c"/>
<circle cx="222.2" cy="767.5" r="3" fill="#f2003c"/>
<rect x="219.5" y="791" width="5.5" height="18" rx="2" fill="#f2003c"/>
<circle cx="93" cy="806" r="2.7" fill="#f2003c"/>
<circle cx="160" cy="806" r="2.7" fill="#f2003c"/>
<circle cx="246" cy="806" r="2.7" fill="#f2003c"/>
<circle cx="289" cy="804" r="2.7" fill="#f2003c"/>
<circle cx="291" cy="807" r="2.7" fill="#f2003c"/>
<circle cx="247.5" cy="831" r="2.7" fill="#5a80ee"/>
</g>
<rect x="90" y="598" width="1" height="271" fill="#505050"/>
<rect x="90" y="598" width="212" height="1" fill="#505050"/>
<rect x="84" y="599" width="5" height="1" fill="#000"/>
<text x="82" y="603.5" font-size="11.5" text-anchor="end" textLength="32.7" lengthAdjust="spacingAndGlyphs" >1.0E-3</text>
<rect x="84" y="637" width="5" height="1" fill="#000"/>
<text x="82" y="641.5" font-size="11.5" text-anchor="end" textLength="32.7" lengthAdjust="spacingAndGlyphs" >1.0E-4</text>
<rect x="84" y="676" width="5" height="1" fill="#000"/>
<text x="82" y="680.5" font-size="11.5" text-anchor="end" textLength="32.7" lengthAdjust="spacingAndGlyphs" >1.0E-5</text>
<rect x="84" y="714" width="5" height="1" fill="#000"/>
<text x="82" y="718.5" font-size="11.5" text-anchor="end" textLength="32.7" lengthAdjust="spacingAndGlyphs" >1.0E-6</text>
<rect x="84" y="753" width="5" height="1" fill="#000"/>
<text x="82" y="757.5" font-size="11.5" text-anchor="end" textLength="32.7" lengthAdjust="spacingAndGlyphs" >1.0E-7</text>
<rect x="84" y="791" width="5" height="1" fill="#000"/>
<text x="82" y="795.5" font-size="11.5" text-anchor="end" textLength="32.7" lengthAdjust="spacingAndGlyphs" >1.0E-8</text>
<rect x="84" y="830" width="5" height="1" fill="#000"/>
<text x="82" y="834.5" font-size="11.5" text-anchor="end" textLength="32.7" lengthAdjust="spacingAndGlyphs" >1.0E-9</text>
<rect x="84" y="868" width="5" height="1" fill="#000"/>
<text x="82" y="872.5" font-size="11.5" text-anchor="end" textLength="38.9" lengthAdjust="spacingAndGlyphs" >1.0E-10</text>
<rect x="91" y="869" width="1" height="6" fill="#000"/>
<text x="91.5" y="888" font-size="11.5" text-anchor="middle" textLength="27.8" lengthAdjust="spacingAndGlyphs" >00:00</text>
<rect x="137" y="869" width="1" height="6" fill="#000"/>
<text x="137.5" y="888" font-size="11.5" text-anchor="middle" textLength="27.8" lengthAdjust="spacingAndGlyphs" >02:00</text>
<rect x="182" y="869" width="1" height="6" fill="#000"/>
<text x="182.5" y="888" font-size="11.5" text-anchor="middle" textLength="27.8" lengthAdjust="spacingAndGlyphs" >04:00</text>
<rect x="228" y="869" width="1" height="6" fill="#000"/>
<text x="228.5" y="888" font-size="11.5" text-anchor="middle" textLength="27.8" lengthAdjust="spacingAndGlyphs" >06:00</text>
<rect x="274" y="869" width="1" height="6" fill="#000"/>
<rect x="301" y="869" width="1" height="6" fill="#000"/>
<text x="301.5" y="888" font-size="11.5" text-anchor="middle" textLength="27.8" lengthAdjust="spacingAndGlyphs" >09:10</text>
<text x="208.5" y="904.5" font-size="12" text-anchor="middle" textLength="25.3" lengthAdjust="spacingAndGlyphs" >Time</text>
<text x="0" y="0" font-size="12" text-anchor="middle" transform="translate(36.5,732.5) rotate(-90)" textLength="82.5" lengthAdjust="spacingAndGlyphs">Pressure (mbar)</text>
<clipPath id="c2"><rect x="403" y="587" width="232" height="283"/></clipPath>
<rect x="402" y="586" width="233" height="284" fill="#000" />
<g clip-path="url(#c2)">
<rect x="408" y="586" width="1" height="284" fill="#625a00"/>
<rect x="413" y="586" width="1" height="284" fill="#625a00"/>
<rect x="418" y="586" width="1" height="284" fill="#625a00"/>
<rect x="423" y="586" width="1" height="284" fill="#625a00"/>
<rect x="428" y="586" width="1" height="284" fill="#625a00"/>
<rect x="434" y="586" width="1" height="284" fill="#625a00"/>
<rect x="439" y="586" width="1" height="284" fill="#625a00"/>
<rect x="444" y="586" width="1" height="284" fill="#ac9e00"/>
<rect x="449" y="586" width="1" height="284" fill="#625a00"/>
<rect x="454" y="586" width="1" height="284" fill="#625a00"/>
<rect x="459" y="586" width="1" height="284" fill="#625a00"/>
<rect x="465" y="586" width="1" height="284" fill="#625a00"/>
<rect x="470" y="586" width="1" height="284" fill="#625a00"/>
<rect x="475" y="586" width="1" height="284" fill="#625a00"/>
<rect x="480" y="586" width="1" height="284" fill="#625a00"/>
<rect x="485" y="586" width="1" height="284" fill="#ac9e00"/>
<rect x="490" y="586" width="1" height="284" fill="#625a00"/>
<rect x="496" y="586" width="1" height="284" fill="#625a00"/>
<rect x="501" y="586" width="1" height="284" fill="#625a00"/>
<rect x="506" y="586" width="1" height="284" fill="#625a00"/>
<rect x="511" y="586" width="1" height="284" fill="#625a00"/>
<rect x="516" y="586" width="1" height="284" fill="#625a00"/>
<rect x="521" y="586" width="1" height="284" fill="#625a00"/>
<rect x="527" y="586" width="1" height="284" fill="#ac9e00"/>
<rect x="532" y="586" width="1" height="284" fill="#625a00"/>
<rect x="537" y="586" width="1" height="284" fill="#625a00"/>
<rect x="542" y="586" width="1" height="284" fill="#625a00"/>
<rect x="547" y="586" width="1" height="284" fill="#625a00"/>
<rect x="553" y="586" width="1" height="284" fill="#625a00"/>
<rect x="558" y="586" width="1" height="284" fill="#625a00"/>
<rect x="563" y="586" width="1" height="284" fill="#625a00"/>
<rect x="568" y="586" width="1" height="284" fill="#ac9e00"/>
<rect x="573" y="586" width="1" height="284" fill="#625a00"/>
<rect x="578" y="586" width="1" height="284" fill="#625a00"/>
<rect x="584" y="586" width="1" height="284" fill="#625a00"/>
<rect x="589" y="586" width="1" height="284" fill="#625a00"/>
<rect x="594" y="586" width="1" height="284" fill="#625a00"/>
<rect x="599" y="586" width="1" height="284" fill="#625a00"/>
<rect x="604" y="586" width="1" height="284" fill="#625a00"/>
<rect x="609" y="586" width="1" height="284" fill="#ac9e00"/>
<rect x="615" y="586" width="1" height="284" fill="#625a00"/>
<rect x="620" y="586" width="1" height="284" fill="#625a00"/>
<rect x="625" y="586" width="1" height="284" fill="#625a00"/>
<rect x="630" y="586" width="1" height="284" fill="#625a00"/>
<rect x="635" y="586" width="1" height="284" fill="#625a00"/>
<rect x="402" y="594" width="233" height="1" fill="#625a00"/>
<rect x="402" y="601" width="233" height="1" fill="#625a00"/>
<rect x="402" y="608" width="233" height="1" fill="#625a00"/>
<rect x="402" y="615" width="233" height="1" fill="#625a00"/>
<rect x="402" y="622" width="233" height="1" fill="#ac9e00"/>
<rect x="402" y="629" width="233" height="1" fill="#625a00"/>
<rect x="402" y="636" width="233" height="1" fill="#625a00"/>
<rect x="402" y="643" width="233" height="1" fill="#625a00"/>
<rect x="402" y="651" width="233" height="1" fill="#625a00"/>
<rect x="402" y="658" width="233" height="1" fill="#ac9e00"/>
<rect x="402" y="665" width="233" height="1" fill="#625a00"/>
<rect x="402" y="672" width="233" height="1" fill="#625a00"/>
<rect x="402" y="679" width="233" height="1" fill="#625a00"/>
<rect x="402" y="686" width="233" height="1" fill="#625a00"/>
<rect x="402" y="693" width="233" height="1" fill="#ac9e00"/>
<rect x="402" y="700" width="233" height="1" fill="#625a00"/>
<rect x="402" y="707" width="233" height="1" fill="#625a00"/>
<rect x="402" y="714" width="233" height="1" fill="#625a00"/>
<rect x="402" y="721" width="233" height="1" fill="#625a00"/>
<rect x="402" y="728" width="233" height="1" fill="#ac9e00"/>
<rect x="402" y="735" width="233" height="1" fill="#625a00"/>
<rect x="402" y="742" width="233" height="1" fill="#625a00"/>
<rect x="402" y="749" width="233" height="1" fill="#625a00"/>
<rect x="402" y="756" width="233" height="1" fill="#625a00"/>
<rect x="402" y="763" width="233" height="1" fill="#ac9e00"/>
<rect x="402" y="770" width="233" height="1" fill="#625a00"/>
<rect x="402" y="777" width="233" height="1" fill="#625a00"/>
<rect x="402" y="784" width="233" height="1" fill="#625a00"/>
<rect x="402" y="791" width="233" height="1" fill="#625a00"/>
<rect x="402" y="799" width="233" height="1" fill="#ac9e00"/>
<rect x="402" y="806" width="233" height="1" fill="#625a00"/>
<rect x="402" y="813" width="233" height="1" fill="#625a00"/>
<rect x="402" y="820" width="233" height="1" fill="#625a00"/>
<rect x="402" y="827" width="233" height="1" fill="#625a00"/>
<rect x="402" y="834" width="233" height="1" fill="#ac9e00"/>
<rect x="402" y="841" width="233" height="1" fill="#625a00"/>
<rect x="402" y="848" width="233" height="1" fill="#625a00"/>
<rect x="402" y="855" width="233" height="1" fill="#625a00"/>
<rect x="402" y="862" width="233" height="1" fill="#625a00"/>
<path d="M446.0,588.9 L451.0,589.7 L456.0,589.0 L461.0,590.1 L466.0,589.5 L471.0,588.6 L476.0,589.7 L481.0,590.0 L486.0,589.0 L491.0,590.4 L496.0,590.2 L501.0,588.7 L506.0,589.5 L511.0,590.3 L516.0,588.9 L521.0,588.8 L526.0,589.4 L531.0,589.2 L536.0,588.9 L541.0,590.2 L546.0,590.0 L551.0,590.3 L556.0,590.0 L561.0,589.6 L566.0,588.8 L571.0,590.1 L576.0,590.3 L581.0,589.3 L586.0,589.4 L591.0,590.4 L596.0,588.6 L601.0,589.9 L606.0,589.5 L611.0,589.6 L616.0,589.0 L621.0,589.6 L626.0,588.9 L631.0,589.2 L635.0,589.5 L635.0,600.0 L631.0,600.8 L626.0,599.4 L621.0,600.2 L616.0,600.2 L611.0,600.4 L606.0,600.0 L601.0,600.9 L596.0,599.3 L591.0,599.8 L586.0,599.8 L581.0,599.8 L576.0,600.7 L571.0,599.5 L566.0,600.0 L561.0,600.4 L556.0,600.5 L551.0,600.7 L546.0,599.5 L541.0,599.5 L536.0,599.2 L531.0,600.0 L526.0,600.1 L521.0,600.8 L516.0,600.6 L511.0,599.8 L506.0,599.3 L501.0,599.7 L496.0,600.2 L491.0,600.4 L486.0,599.2 L481.0,599.5 L476.0,599.2 L471.0,599.8 L466.0,599.5 L461.0,600.0 L456.0,600.5 L451.0,600.0 L446.0,600.3 Z" fill="#00f0c0"/>
<circle cx="447" cy="595" r="5.2" fill="#00f0c0"/>
<path d="M448.0,600.5 L453.0,598.5 L458.0,598.8 L463.0,599.8 L468.0,600.4 L473.0,600.5 L478.0,599.7 L483.0,599.9 L488.0,600.0 L493.0,600.3 L498.0,599.1 L503.0,600.3 L508.0,600.5 L513.0,600.5 L518.0,599.9 L523.0,599.0 L528.0,599.1 L533.0,600.5 L538.0,598.7 L543.0,599.9 L548.0,598.5 L553.0,598.5 L558.0,599.5 L563.0,599.3 L568.0,600.4 L573.0,599.2 L578.0,599.1 L583.0,599.6 L588.0,599.9 L593.0,598.6 L598.0,599.2 L603.0,599.3 L608.0,600.5 L613.0,599.3 L618.0,600.4 L623.0,599.6 L628.0,599.1 L633.0,598.8 L635.0,599.5 L635.0,613.0 L633.0,612.0 L628.0,612.7 L623.0,612.7 L618.0,612.3 L613.0,612.1 L608.0,613.0 L603.0,613.9 L598.0,612.8 L593.0,614.1 L588.0,613.1 L583.0,612.9 L578.0,613.2 L573.0,613.2 L568.0,612.6 L563.0,613.4 L558.0,613.0 L553.0,613.9 L548.0,613.1 L543.0,612.3 L538.0,613.7 L533.0,613.3 L528.0,613.6 L523.0,614.0 L518.0,613.2 L513.0,613.1 L508.0,613.6 L503.0,613.2 L498.0,612.3 L493.0,613.2 L488.0,612.0 L483.0,613.9 L478.0,614.0 L473.0,612.6 L468.0,612.4 L463.0,612.7 L458.0,612.2 L453.0,614.1 L448.0,612.2 Z" fill="#f2003c"/>
<circle cx="448.5" cy="606" r="6.5" fill="#f2003c"/>
<rect x="442" y="866.5" width="193" height="3" fill="#f8ee00"/>
</g>
<rect x="402" y="586" width="1" height="284" fill="#505050"/>
<rect x="402" y="586" width="233" height="1" fill="#505050"/>
<rect x="396" y="587" width="5" height="1" fill="#000"/>
<text x="394" y="591.5" font-size="11.5" text-anchor="end" textLength="15.4" lengthAdjust="spacingAndGlyphs" >7.0</text>
<rect x="396" y="622" width="5" height="1" fill="#000"/>
<text x="394" y="626.5" font-size="11.5" text-anchor="end" textLength="15.4" lengthAdjust="spacingAndGlyphs" >6.0</text>
<rect x="396" y="658" width="5" height="1" fill="#000"/>
<text x="394" y="662.5" font-size="11.5" text-anchor="end" textLength="15.4" lengthAdjust="spacingAndGlyphs" >5.0</text>
<rect x="396" y="693" width="5" height="1" fill="#000"/>
<text x="394" y="697.5" font-size="11.5" text-anchor="end" textLength="15.4" lengthAdjust="spacingAndGlyphs" >4.0</text>
<rect x="396" y="728" width="5" height="1" fill="#000"/>
<text x="394" y="732.5" font-size="11.5" text-anchor="end" textLength="15.4" lengthAdjust="spacingAndGlyphs" >3.0</text>
<rect x="396" y="763" width="5" height="1" fill="#000"/>
<text x="394" y="767.5" font-size="11.5" text-anchor="end" textLength="15.4" lengthAdjust="spacingAndGlyphs" >2.0</text>
<rect x="396" y="799" width="5" height="1" fill="#000"/>
<text x="394" y="803.5" font-size="11.5" text-anchor="end" textLength="15.4" lengthAdjust="spacingAndGlyphs" >1.0</text>
<rect x="396" y="834" width="5" height="1" fill="#000"/>
<text x="394" y="838.5" font-size="11.5" text-anchor="end" textLength="15.4" lengthAdjust="spacingAndGlyphs" >0.0</text>
<rect x="396" y="869" width="5" height="1" fill="#000"/>
<text x="394" y="873.5" font-size="11.5" text-anchor="end" textLength="19.1" lengthAdjust="spacingAndGlyphs" >-1.0</text>
<rect x="403" y="870" width="1" height="6" fill="#000"/>
<text x="403.5" y="888.5" font-size="11.5" text-anchor="middle" textLength="27.8" lengthAdjust="spacingAndGlyphs" >22:00</text>
<rect x="444" y="870" width="1" height="6" fill="#000"/>
<text x="444.5" y="888.5" font-size="11.5" text-anchor="middle" textLength="27.8" lengthAdjust="spacingAndGlyphs" >00:00</text>
<rect x="486" y="870" width="1" height="6" fill="#000"/>
<text x="486.5" y="888.5" font-size="11.5" text-anchor="middle" textLength="27.8" lengthAdjust="spacingAndGlyphs" >02:00</text>
<rect x="527" y="870" width="1" height="6" fill="#000"/>
<text x="527.5" y="888.5" font-size="11.5" text-anchor="middle" textLength="27.8" lengthAdjust="spacingAndGlyphs" >04:00</text>
<rect x="568" y="870" width="1" height="6" fill="#000"/>
<text x="568.5" y="888.5" font-size="11.5" text-anchor="middle" textLength="27.8" lengthAdjust="spacingAndGlyphs" >06:00</text>
<rect x="610" y="870" width="1" height="6" fill="#000"/>
<rect x="634" y="870" width="1" height="6" fill="#000"/>
<text x="634.5" y="888.5" font-size="11.5" text-anchor="middle" textLength="27.8" lengthAdjust="spacingAndGlyphs" >09:10</text>
<text x="508" y="905.5" font-size="12" text-anchor="middle" textLength="25.3" lengthAdjust="spacingAndGlyphs" >Time</text>
<text x="0" y="0" font-size="12" text-anchor="middle" transform="translate(367,728.2) rotate(-90)" textLength="83" lengthAdjust="spacingAndGlyphs">Temperature (K)</text>
<rect x="655" y="588" width="312" height="311" fill="#c0c0c0" />
<rect x="655" y="588" width="312" height="3" fill="#d4d4d4" />
<rect x="655" y="588" width="12" height="311" fill="url(#lgrad)" />
<rect x="953" y="588" width="14" height="311" fill="url(#rgrad)" />
<rect x="655" y="896" width="312" height="2" fill="#9a9a9a" />
<clipPath id="c3"><rect x="730" y="598" width="193" height="245"/></clipPath>
<rect x="729" y="597" width="194" height="246" fill="#000" />
<g clip-path="url(#c3)">
<rect x="735" y="597" width="1" height="246" fill="#625a00"/>
<rect x="740" y="597" width="1" height="246" fill="#625a00"/>
<rect x="745" y="597" width="1" height="246" fill="#625a00"/>
<rect x="751" y="597" width="1" height="246" fill="#625a00"/>
<rect x="756" y="597" width="1" height="246" fill="#625a00"/>
<rect x="761" y="597" width="1" height="246" fill="#625a00"/>
<rect x="766" y="597" width="1" height="246" fill="#625a00"/>
<rect x="772" y="597" width="1" height="246" fill="#625a00"/>
<rect x="777" y="597" width="1" height="246" fill="#ac9e00"/>
<rect x="782" y="597" width="1" height="246" fill="#625a00"/>
<rect x="788" y="597" width="1" height="246" fill="#625a00"/>
<rect x="793" y="597" width="1" height="246" fill="#625a00"/>
<rect x="798" y="597" width="1" height="246" fill="#625a00"/>
<rect x="803" y="597" width="1" height="246" fill="#625a00"/>
<rect x="809" y="597" width="1" height="246" fill="#625a00"/>
<rect x="814" y="597" width="1" height="246" fill="#625a00"/>
<rect x="819" y="597" width="1" height="246" fill="#625a00"/>
<rect x="825" y="597" width="1" height="246" fill="#ac9e00"/>
<rect x="830" y="597" width="1" height="246" fill="#625a00"/>
<rect x="835" y="597" width="1" height="246" fill="#625a00"/>
<rect x="840" y="597" width="1" height="246" fill="#625a00"/>
<rect x="846" y="597" width="1" height="246" fill="#625a00"/>
<rect x="851" y="597" width="1" height="246" fill="#625a00"/>
<rect x="856" y="597" width="1" height="246" fill="#625a00"/>
<rect x="861" y="597" width="1" height="246" fill="#625a00"/>
<rect x="867" y="597" width="1" height="246" fill="#625a00"/>
<rect x="872" y="597" width="1" height="246" fill="#ac9e00"/>
<rect x="877" y="597" width="1" height="246" fill="#625a00"/>
<rect x="883" y="597" width="1" height="246" fill="#625a00"/>
<rect x="888" y="597" width="1" height="246" fill="#625a00"/>
<rect x="893" y="597" width="1" height="246" fill="#625a00"/>
<rect x="898" y="597" width="1" height="246" fill="#625a00"/>
<rect x="904" y="597" width="1" height="246" fill="#625a00"/>
<rect x="909" y="597" width="1" height="246" fill="#625a00"/>
<rect x="914" y="597" width="1" height="246" fill="#625a00"/>
<rect x="920" y="597" width="1" height="246" fill="#ac9e00"/>
<rect x="925" y="597" width="1" height="246" fill="#625a00"/>
<rect x="930" y="597" width="1" height="246" fill="#625a00"/>
<rect x="935" y="597" width="1" height="246" fill="#625a00"/>
<rect x="729" y="609" width="194" height="1" fill="#625a00"/>
<rect x="729" y="622" width="194" height="1" fill="#625a00"/>
<rect x="729" y="634" width="194" height="1" fill="#625a00"/>
<rect x="729" y="646" width="194" height="1" fill="#625a00"/>
<rect x="729" y="658" width="194" height="1" fill="#625a00"/>
<rect x="729" y="671" width="194" height="1" fill="#625a00"/>
<rect x="729" y="683" width="194" height="1" fill="#625a00"/>
<rect x="729" y="695" width="194" height="1" fill="#625a00"/>
<rect x="729" y="708" width="194" height="1" fill="#625a00"/>
<rect x="729" y="720" width="194" height="1" fill="#ac9e00"/>
<rect x="729" y="732" width="194" height="1" fill="#625a00"/>
<rect x="729" y="744" width="194" height="1" fill="#625a00"/>
<rect x="729" y="757" width="194" height="1" fill="#625a00"/>
<rect x="729" y="769" width="194" height="1" fill="#625a00"/>
<rect x="729" y="781" width="194" height="1" fill="#625a00"/>
<rect x="729" y="793" width="194" height="1" fill="#625a00"/>
<rect x="729" y="806" width="194" height="1" fill="#625a00"/>
<rect x="729" y="818" width="194" height="1" fill="#625a00"/>
<rect x="729" y="830" width="194" height="1" fill="#625a00"/>
<rect x="777" y="597" width="1" height="246" fill="#f8f000"/>
<rect x="729" y="720" width="48" height="1" fill="#f0e800"/>
<rect x="777" y="718" width="146" height="5" fill="#f8143c"/>
<rect x="777" y="720" width="146" height="1" fill="#f8e800"/>
<rect x="775" y="718" width="5" height="5" fill="#f8143c" />
<path d="M775.5,718.5 L779.5,722.5 M779.5,718.5 L775.5,722.5" stroke="#f8e800" stroke-width="1"/>
</g>
<rect x="729" y="597" width="1" height="246" fill="#505050"/>
<rect x="729" y="597" width="194" height="1" fill="#505050"/>
<rect x="923" y="597" width="1" height="247" fill="#f0f0f0"/>
<rect x="721" y="597" width="7" height="1" fill="#000"/>
<text x="720" y="601.5" font-size="11.5" text-anchor="end" >1</text>
<rect x="721" y="720" width="7" height="1" fill="#000"/>
<text x="720" y="724.5" font-size="11.5" text-anchor="end" >0</text>
<rect x="721" y="843" width="7" height="1" fill="#000"/>
<text x="720" y="847.5" font-size="11.5" text-anchor="end" >-1</text>
<rect x="730" y="843" width="1" height="6" fill="#000"/>
<text x="730" y="862" font-size="11.5" text-anchor="middle" textLength="27.8" lengthAdjust="spacingAndGlyphs" >21:00</text>
<text x="730" y="876.5" font-size="12" text-anchor="middle" textLength="46" lengthAdjust="spacingAndGlyphs" >4/2/2023</text>
<rect x="777" y="843" width="1" height="6" fill="#000"/>
<text x="776.7" y="862" font-size="11.5" text-anchor="middle" textLength="27.8" lengthAdjust="spacingAndGlyphs" >00:00</text>
<text x="776.7" y="876.5" font-size="12" text-anchor="middle" textLength="46" lengthAdjust="spacingAndGlyphs" >4/3/2023</text>
<rect x="825" y="843" width="1" height="6" fill="#000"/>
<text x="824.3" y="862" font-size="11.5" text-anchor="middle" textLength="27.8" lengthAdjust="spacingAndGlyphs" >03:00</text>
<text x="824.3" y="876.5" font-size="12" text-anchor="middle" textLength="46" lengthAdjust="spacingAndGlyphs" >4/3/2023</text>
<rect x="872" y="843" width="1" height="6" fill="#000"/>
<text x="871.4" y="862" font-size="11.5" text-anchor="middle" textLength="27.8" lengthAdjust="spacingAndGlyphs" >06:00</text>
<text x="871.4" y="876.5" font-size="12" text-anchor="middle" textLength="46" lengthAdjust="spacingAndGlyphs" >4/3/2023</text>
<rect x="922" y="843" width="1" height="6" fill="#000"/>
<text x="921" y="862" font-size="11.5" text-anchor="middle" textLength="27.8" lengthAdjust="spacingAndGlyphs" >09:10</text>
<text x="921" y="876.5" font-size="12" text-anchor="middle" textLength="46" lengthAdjust="spacingAndGlyphs" >4/3/2023</text>
<rect x="920" y="843" width="1" height="6" fill="#000"/>
<text x="827" y="894" font-size="12" text-anchor="middle" textLength="25.3" lengthAdjust="spacingAndGlyphs" >Time</text>
<text x="0" y="0" font-size="12" text-anchor="middle" transform="translate(703.5,720.8) rotate(-90)" textLength="61" lengthAdjust="spacingAndGlyphs">Counts/sec</text>
<polygon points="21,919 77,919 74,922 24,922 24,943 21,946" fill="#c2b49a"/>
<polygon points="77,919 77,946 21,946 24,943 74,943 74,922" fill="#efe3cb"/>
<rect x="24" y="922" width="50" height="21" fill="#d4d4d4" />
<text x="26" y="937" font-size="12" textLength="29.0" lengthAdjust="spacingAndGlyphs" >581.7</text>
<text x="79.5" y="931" font-size="12" textLength="82" lengthAdjust="spacingAndGlyphs" >Cycle time [ms]</text>
<polygon points="79,935 153,935 151,937 81,937 81,943 79,945" fill="#bfb199"/>
<polygon points="153,935 153,945 79,945 81,943 151,943 151,937" fill="#efe3cb"/>
<rect x="81" y="937" width="70" height="6" fill="url(#prog)" />
<rect x="193" y="918" width="204" height="33" fill="#404040" />
<rect x="194" y="919" width="202" height="31" fill="url(#stopg)" />
<polygon points="194,919 396,919 394,921 196,921 196,948 194,950" fill="#e6e6e6"/>
<polygon points="396,919 396,950 194,950 196,948 394,948 394,921" fill="#7a7a7a"/>
<text x="295" y="940.5" font-size="16" font-weight="bold" text-anchor="middle" fill="#f00000" textLength="131" lengthAdjust="spacingAndGlyphs" >STOP PROGRAM</text>
<polygon points="436,914 671,914 667,918 440,918 440,947 436,951" fill="#bfb199"/>
<polygon points="671,914 671,951 436,951 440,947 667,947 667,918" fill="#efe3cb"/>
<rect x="440" y="918" width="227" height="29" fill="#80f870" />
<text x="553" y="940.5" font-size="19" text-anchor="middle" textLength="94" lengthAdjust="spacingAndGlyphs" >System OK</text>
<text x="701" y="937.5" font-size="12" textLength="115" lengthAdjust="spacingAndGlyphs" >Last moderator grown</text>
<polygon points="820,921 951,921 947,925 824,925 824,942 820,946" fill="#bfb199"/>
<polygon points="951,921 951,946 820,946 824,942 947,942 947,925" fill="#efe3cb"/>
<rect x="824" y="925" width="123" height="17" fill="#d4d4d4" />
<text x="826" y="937.5" font-size="12" textLength="110" lengthAdjust="spacingAndGlyphs" >Wed 29 Mar 2023 10:</text>
<rect x="0" y="953" width="967" height="2" fill="#f4f4f4" />
<rect x="0" y="953" width="55" height="1" fill="#000" />
</svg>
</body></html>
